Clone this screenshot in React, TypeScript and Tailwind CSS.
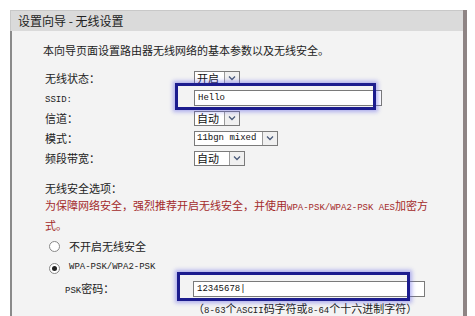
import React from 'react'

const cjk = "font-['SimSun','Noto_Sans_CJK_SC',sans-serif]"
const mono = "font-['Liberation_Mono','Noto_Sans_CJK_SC',monospace]"

const Select = ({ value, width, isMono }: { value: string; width: string; isMono?: boolean }) => (
	<div className={`flex h-[15px] items-stretch whitespace-nowrap border border-[#7a7a7a] bg-white ${width}`}>
		<span className={`flex-1 pl-[2px] leading-[13px] text-[#111] ${isMono ? `${mono} text-[9px]` : 'text-[11px]'}`}>{value}</span>
		<span className="flex w-[15px] items-center justify-center border-l border-[#9a9a9a] bg-[#f0f0f0]">
			<svg width="8" height="6" viewBox="0 0 8 6">
				<path d="M1 1.5 L4 4.5 L7 1.5" fill="none" stroke="#4a5a7a" strokeWidth="1.3" />
			</svg>
		</span>
	</div>
)

const Highlight = ({ cls }: { cls: string }) => (
	<div className={`pointer-events-none absolute border-[3px] border-[#1c1c8e] shadow-[0_0_4px_2px_rgba(90,90,230,0.45)] ${cls}`} />
)

const Row = ({ label, children }: { label: React.ReactNode; children: React.ReactNode }) => (
	<div className="flex h-[20px] items-center">
		<span className="w-[149px] text-[11px] text-[#222]">{label}</span>
		{children}
	</div>
)

const App: React.FC = () => {
	return (
		<div className={`h-[316px] w-[475px] overflow-hidden bg-white pl-[10px] pt-[10px] ${cjk}`}>
			<div className="w-[457px] border-r-[4px] border-r-[#8e8484]">
				<div className="flex h-[21px] items-center border-l border-t border-[#c8c8c8] bg-[#dadada] pl-[7px] text-[12px] text-[#222]">
					设置向导 - 无线设置
				</div>
				<div className="h-[300px] border-l-2 border-[#8a8a8a] bg-[#f3f3f3] pl-[31px] pt-[11px]">
					<p className="whitespace-nowrap text-[11px] leading-[16px] text-[#222]">本向导页面设置路由器无线网络的基本参数以及无线安全。</p>
					<div className="mt-[10px] pl-[2px]">
						<Row label="无线状态：">
							<Select value="开启" width="w-[46px]" />
						</Row>
						<Row label={<span className={`${mono} text-[9px]`}>SSID:</span>}>
							<div className="relative">
								<div className={`h-[16px] w-[188px] border border-[#7a7a7a] bg-white pl-[3px] ${mono} text-[9px] leading-[14px] text-[#111]`}>Hello</div>
								<Highlight cls="-left-[19px] -top-[7px] h-[27px] w-[201px]" />
							</div>
						</Row>
						<Row label="信道：">
							<Select value="自动" width="w-[46px]" />
						</Row>
						<Row label="模式：">
							<Select value="11bgn mixed" width="w-[84px]" isMono />
						</Row>
						<Row label="频段带宽：">
							<Select value="自动" width="w-[51px]" />
						</Row>
					</div>
					<p className="mt-[12px] pl-[2px] text-[11px] leading-[17px] text-[#222]">无线安全选项：</p>
					<p className="whitespace-nowrap pl-[2px] text-[11px] leading-[17px] text-[#a32a2a]">
						为保障网络安全，强烈推荐开启无线安全，并使用<span className={`${mono} text-[9px]`}>WPA-PSK/WPA2-PSK AES</span>加密方
						<br />
						式。
					</p>
					<div className="mt-[1px] flex h-[22px] items-center pl-[6px]">
						<span className="h-[11px] w-[11px] rounded-full border border-[#888] bg-white" />
						<span className="ml-[9px] text-[11px] text-[#222]">不开启无线安全</span>
					</div>
					<div className="flex h-[22px] items-center pl-[6px]">
						<span className="flex h-[11px] w-[11px] items-center justify-center rounded-full border border-[#888] bg-white">
							<span className="h-[5px] w-[5px] rounded-full bg-[#222]" />
						</span>
						<span className={`ml-[9px] ${mono} text-[9px] text-[#222]`}>WPA-PSK/WPA2-PSK</span>
					</div>
					<div className="flex h-[20px] items-center pl-[22px]">
						<span className="w-[128px] text-[11px] text-[#222]">
							<span className={`${mono} text-[9px]`}>PSK</span>密码：
						</span>
						<div className="relative">
							<div className={`h-[16px] w-[232px] border border-[#7a7a7a] bg-white pl-[3px] ${mono} text-[9px] leading-[14px] text-[#111]`}>12345678|</div>
							<Highlight cls="-left-[16px] -top-[9px] h-[29px] w-[233px]" />
						</div>
					</div>
					<p className="mt-[1px] whitespace-nowrap pl-[150px] text-[11px] leading-[16px] text-[#222]">
						（<span className={`${mono} text-[9px]`}>8-63</span>个<span className={`${mono} text-[9px]`}>ASCII</span>码字符或<span className={`${mono} text-[9px]`}>8-64</span>个十六进制字符）
					</p>
				</div>
			</div>
		</div>
	)
}

export default App
